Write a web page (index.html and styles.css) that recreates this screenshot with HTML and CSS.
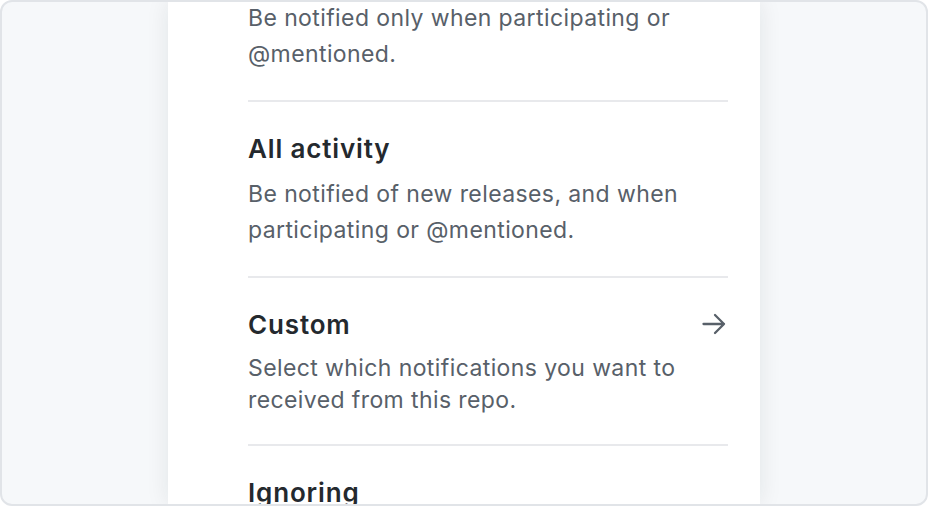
FILE: index.html
```html
<!DOCTYPE html>
<html lang="en">
<head>
  <meta charset="UTF-8">
  <meta name="viewport" content="width=device-width, initial-scale=1.0">
  <title>Watch settings</title>
  <link rel="stylesheet" href="styles.css">
</head>
<body>
  <div class="frame">
    <div class="sheet">
      <ul class="options">
        <li class="option">
          <div class="option-head">
            <span class="option-title">Participating and @mentions</span>
          </div>
          <p class="option-desc">Be notified only when participating or @mentioned.</p>
        </li>
        <li class="option">
          <div class="option-head">
            <span class="option-title">All activity</span>
          </div>
          <p class="option-desc">Be notified of new releases, and when participating or @mentioned.</p>
        </li>
        <li class="option">
          <div class="option-head">
            <span class="option-title">Custom</span>
            <svg class="arrow" width="26" height="26" viewBox="0 0 26 26" aria-hidden="true">
              <path d="M1.5 13H22M13 4l9 9-9 9" fill="none" stroke="currentColor" stroke-width="2.3" stroke-linecap="round" stroke-linejoin="round"/>
            </svg>
          </div>
          <p class="option-desc option-desc-tight">Select which notifications you want to received from this repo.</p>
        </li>
        <li class="option">
          <div class="option-head">
            <span class="option-title">Ignoring</span>
          </div>
          <p class="option-desc">Never be notified.</p>
        </li>
      </ul>
    </div>
  </div>
</body>
</html>
```

FILE: styles.css
```css
html, body {
  margin: 0;
  padding: 0;
}
body {
  font-family: Inter, "Noto Sans", "Liberation Sans", sans-serif;
  background-color: #ffffff;
}
.frame {
  box-sizing: border-box;
  width: 928px;
  height: 506px;
  border: 2px solid #e1e4e8;
  border-radius: 12px;
  background-color: #f6f8fa;
  overflow: hidden;
  display: flex;
  justify-content: center;
}
.sheet {
  width: 592px;
  padding: 0 32px 0 80px;
  box-sizing: border-box;
  background-color: #ffffff;
  box-shadow: 0 0 22px rgba(27, 31, 35, 0.09);
}
.options {
  list-style: none;
  margin: -76px 0 0 0; /* list is scrolled, first title is off screen */
  padding: 0;
}
.option {
  padding: 28px 0;
  border-bottom: 2px solid #e8e9ec;
}
.option-head {
  display: flex;
  align-items: center;
  justify-content: space-between;
  height: 36px;
}
.option-title {
  font-size: 26px;
  font-weight: 600;
  color: #24292e;
  letter-spacing: 0.85px;
}
.arrow {
  color: #586069;
}
.option-desc {
  margin: 10px 0 0 0;
  font-size: 23px;
  line-height: 36px;
  letter-spacing: 0.4px;
  color: #586069;
}
.option-desc-tight {
  line-height: 32px;
}
```
